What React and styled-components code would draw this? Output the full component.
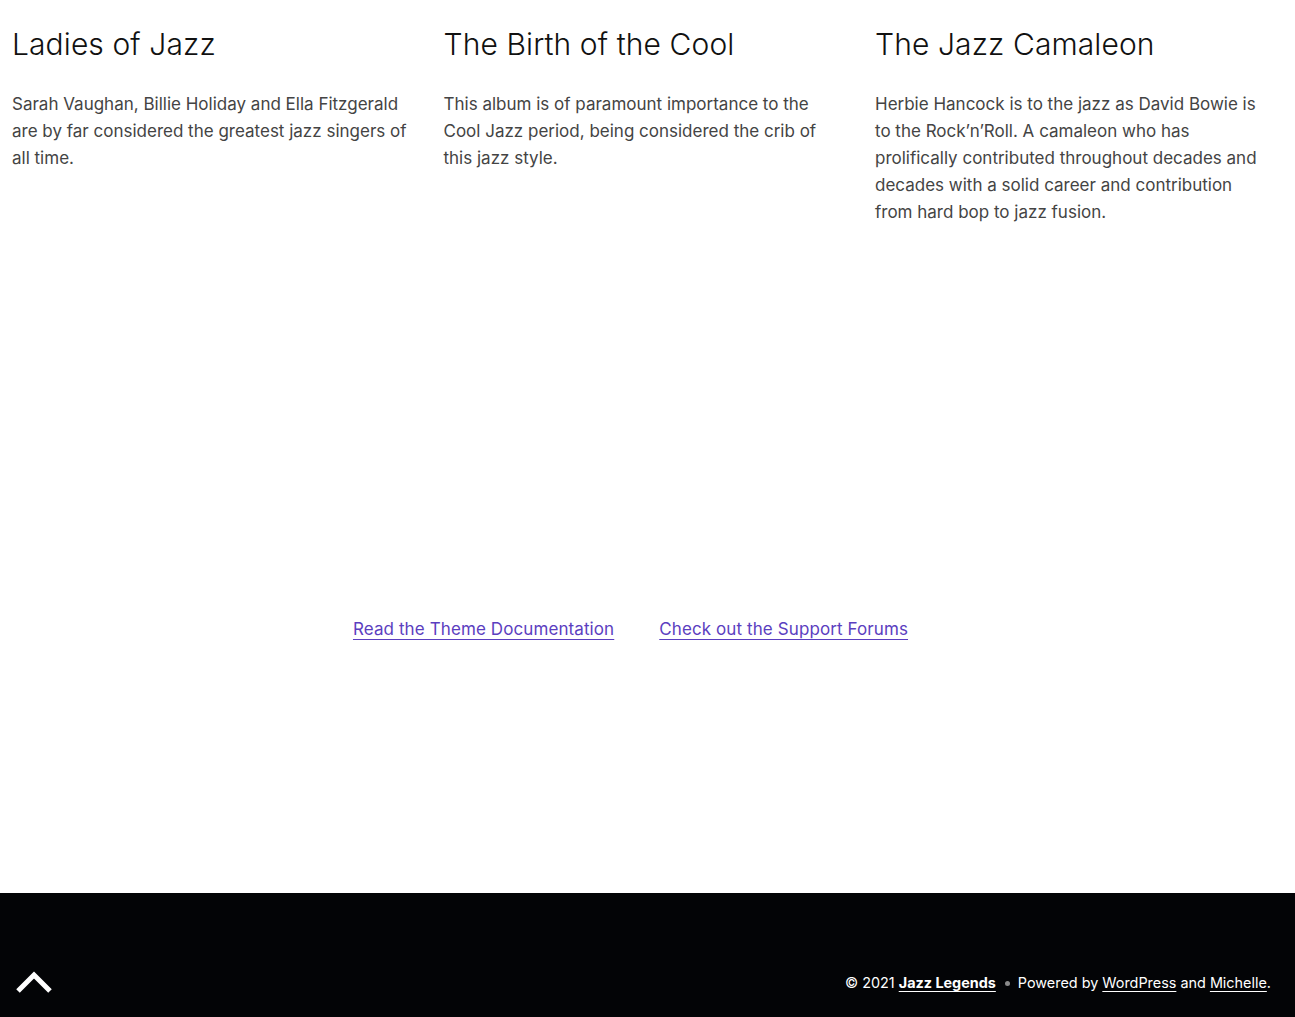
import React from "react";
import styled, { createGlobalStyle } from "styled-components";

const Global = createGlobalStyle`
  html, body { margin: 0; padding: 0; background: #fff; }
  body { font-family: Inter, "Noto Sans", sans-serif; -webkit-font-smoothing: antialiased; }
  * { box-sizing: border-box; }
`;

const Page = styled.div`
  min-height: 100vh;
  display: flex;
  flex-direction: column;
`;

const Columns = styled.section`
  display: grid;
  grid-template-columns: repeat(3, 397px);
  column-gap: 34.5px;
  padding: 25px 0 0 12px;
`;

const Column = styled.article`
  display: flex;
  flex-direction: column;
  gap: 28px;
`;

const Heading = styled.h2`
  margin: 0;
  font-family: "Inter Light", Inter, sans-serif;
  font-weight: 300;
  font-size: 30px;
  line-height: 38px;
  color: #111;
  letter-spacing: 0.1px;
`;

const Text = styled.p`
  margin: 0;
  font-size: 17px;
  line-height: 27px;
  color: #444;
`;

const LinkRow = styled.nav`
  display: flex;
  justify-content: center;
  gap: 45px;
  margin-top: 390px;
  padding-right: 34px;
`;

const DocLink = styled.a`
  font-size: 17px;
  line-height: 27px;
  color: #5b3ec0;
  letter-spacing: 0.1px;
  text-decoration: underline;
  text-underline-offset: 4px;
  text-decoration-thickness: 1px;
`;

const Footer = styled.footer`
  margin-top: auto;
  height: 124px;
  background: #030406;
  display: flex;
  align-items: flex-end;
  justify-content: space-between;
  padding: 0 24px 22px 14px;
`;

const TopButton = styled.a`
  display: flex;
  width: 40px;
  height: 28px;
  align-items: center;
  justify-content: center;
  margin-bottom: -2px;
`;

const Credits = styled.p`
  margin: 0;
  color: #fff;
  font-size: 14.4px;
  line-height: 24px;
`;

const FooterLink = styled.a`
  color: #fff;
  font-weight: ${(p) => (p.$bold ? 700 : 400)};
  text-decoration: underline;
  text-underline-offset: 3px;
  text-decoration-thickness: 1px;
`;

const Dot = styled.span`
  display: inline-block;
  width: 5px;
  height: 5px;
  border-radius: 50%;
  background: #8a8a8a;
  margin: 0 8px 2px 9px;
  vertical-align: middle;
`;

const items = [
  {
    title: "Ladies of Jazz",
    text: "Sarah Vaughan, Billie Holiday and Ella Fitzgerald are by far considered the greatest jazz singers of all time.",
  },
  {
    title: "The Birth of the Cool",
    text: "This album is of paramount importance to the Cool Jazz period, being considered the crib of this jazz style.",
  },
  {
    title: "The Jazz Camaleon",
    text: "Herbie Hancock is to the jazz as David Bowie is to the Rock’n’Roll. A camaleon who has prolifically contributed throughout decades and decades with a solid career and contribution from hard bop to jazz fusion.",
  },
];

export default function App() {
  return (
    <Page>
      <Global />
      <Columns>
        {items.map((it) => (
          <Column key={it.title}>
            <Heading>{it.title}</Heading>
            <Text>{it.text}</Text>
          </Column>
        ))}
      </Columns>
      <LinkRow>
        <DocLink href="#">Read the Theme Documentation</DocLink>
        <DocLink href="#">Check out the Support Forums</DocLink>
      </LinkRow>
      <Footer>
        <TopButton href="#" aria-label="Back to top">
          <svg width="38" height="24" viewBox="0 0 38 24">
            <polyline points="3,20 19,4 35,20" fill="none" stroke="#fff" strokeWidth="5" strokeLinecap="butt" strokeLinejoin="miter" />
          </svg>
        </TopButton>
        <Credits>
          © 2021 <FooterLink href="#" $bold>Jazz Legends</FooterLink>
          <Dot />
          Powered by <FooterLink href="#">WordPress</FooterLink> and{" "}
          <FooterLink href="#">Michelle</FooterLink>.
        </Credits>
      </Footer>
    </Page>
  );
}
